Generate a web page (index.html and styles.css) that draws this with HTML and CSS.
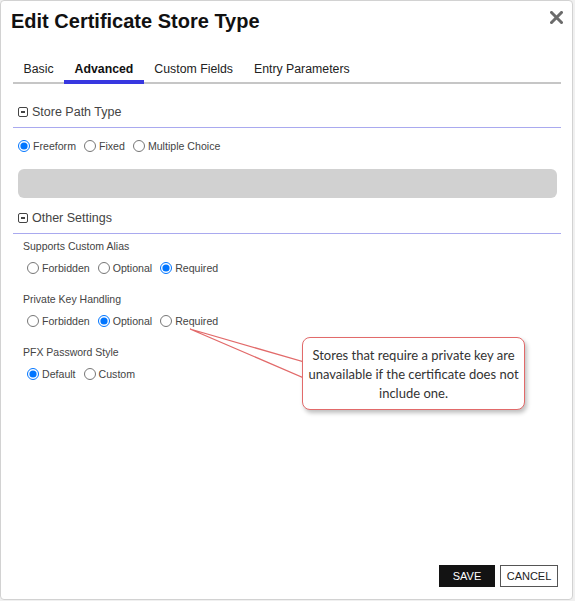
FILE: index.html
```html
<!DOCTYPE html>
<html lang="en">
<head>
    <meta charset="UTF-8">
    <meta name="viewport" content="width=device-width, initial-scale=1.0">
    <title>Edit Certificate Store Type</title>
    <link rel="stylesheet" href="styles.css">
</head>
<body>
    <div class="dialog">
        <div class="dialog-header">
            <h1>Edit Certificate Store Type</h1>
            <button type="button" class="close-btn" aria-label="Close">
                <svg width="13" height="13" viewBox="0 0 13 13">
                    <path d="M1.5 1.5 L11.5 11.5 M11.5 1.5 L1.5 11.5" stroke="#6b6b6b" stroke-width="3" stroke-linecap="square"/>
                </svg>
            </button>
        </div>

        <div class="tabs">
            <span class="tab">Basic</span>
            <span class="tab active">Advanced</span>
            <span class="tab">Custom Fields</span>
            <span class="tab">Entry Parameters</span>
        </div>

        <div class="section">
            <div class="section-title"><span class="toggle"></span>Store Path Type</div>
            <div class="radio-row">
                <label class="radio"><input type="radio" name="pathType" checked> Freeform</label>
                <label class="radio"><input type="radio" name="pathType"> Fixed</label>
                <label class="radio"><input type="radio" name="pathType"> Multiple Choice</label>
            </div>
            <div class="path-input"></div>
        </div>

        <div class="section">
            <div class="section-title other"><span class="toggle"></span>Other Settings</div>

            <div class="field">
                <div class="field-label">Supports Custom Alias</div>
                <div class="radio-row">
                    <label class="radio"><input type="radio" name="alias"> Forbidden</label>
                    <label class="radio"><input type="radio" name="alias"> Optional</label>
                    <label class="radio"><input type="radio" name="alias" checked> Required</label>
                </div>
            </div>

            <div class="field">
                <div class="field-label">Private Key Handling</div>
                <div class="radio-row">
                    <label class="radio"><input type="radio" name="privateKey"> Forbidden</label>
                    <label class="radio"><input type="radio" name="privateKey" checked> Optional</label>
                    <label class="radio"><input type="radio" name="privateKey"> Required</label>
                </div>
            </div>

            <div class="field">
                <div class="field-label">PFX Password Style</div>
                <div class="radio-row">
                    <label class="radio"><input type="radio" name="pfx" checked> Default</label>
                    <label class="radio"><input type="radio" name="pfx"> Custom</label>
                </div>
            </div>
        </div>

        <div class="dialog-footer">
            <button type="button" class="btn btn-save">SAVE</button>
            <button type="button" class="btn btn-cancel">CANCEL</button>
        </div>

        <!-- note pointing at the private key "Required" option -->
        <svg class="callout-pointer" width="575" height="601">
            <polygon points="190,329 304,362 304,378" fill="#fff" stroke="#e26a6a" stroke-width="1.3"/>
        </svg>
        <div class="callout">
            Stores that require a private key are unavailable if the certificate does not include one.
        </div>
    </div>
</body>
</html>
```

FILE: styles.css
```css
body {
    margin: 0;
    background-color: #f0f0f0;
    font-family: "Liberation Sans", Arial, sans-serif;
}

.dialog {
    position: relative;
    box-sizing: border-box;
    width: 573px;
    height: 600px;
    padding: 0 11px 12px 12px;
    background-color: #fff;
    border: 1px solid #d2d2d2;
    border-radius: 4px;
    display: flex;
    flex-direction: column;
}

.dialog-header {
    display: flex;
    justify-content: space-between;
    align-items: flex-start;
    padding-top: 8px;
}

.dialog-header h1 {
    margin: 0 0 0 -2px;
    font-size: 20px;
    line-height: 24px;
    font-weight: bold;
    color: #111;
}

.close-btn {
    margin-top: 2px;
    margin-right: -2px;
    padding: 0;
    border: none;
    background: none;
    cursor: pointer;
    line-height: 0;
}

.tabs {
    display: flex;
    margin-top: 28px;
    border-bottom: 2px solid #c6c6c6;
}

.tab {
    padding: 0 10.5px 3px;
    margin-bottom: -2px;
    font-size: 12.3px;
    line-height: 16px;
    color: #222;
    border-bottom: 4px solid transparent;
}

.tab.active {
    font-weight: bold;
    color: #111;
    border-bottom-color: #3737e0;
}

.section-title {
    display: flex;
    align-items: center;
    margin-top: 19px;
    padding: 0 0 6px 5px;
    font-size: 12.5px;
    line-height: 18px;
    color: #444;
    border-bottom: 1px solid #a9a9ef;
}

.section-title.other {
    margin-top: 11px;
}

.toggle {
    position: relative;
    box-sizing: border-box;
    width: 10px;
    height: 10px;
    margin-right: 4px;
    border: 1px solid #444;
    border-radius: 2px;
}

.toggle::after {
    content: "";
    position: absolute;
    left: 2px;
    top: 3px;
    width: 4px;
    height: 2px;
    background-color: #444;
}

.radio-row {
    display: flex;
    gap: 8px;
    margin-top: 10px;
    padding-left: 5px;
}

.radio {
    display: flex;
    align-items: center;
    font-size: 10.6px;
    line-height: 16px;
    color: #444;
}

.radio input {
    width: 12px;
    height: 12px;
    margin: 0 3px 0 0;
}

.path-input {
    height: 29px;
    margin: 15px 4px 0 5px;
    background-color: #d1d1d1;
    border-radius: 6px;
}

.field {
    margin-top: 16px;
    padding-left: 10px;
}

.section-title.other + .field {
    margin-top: 5px;
}

.field-label {
    font-size: 10.5px;
    line-height: 14px;
    color: #444;
}

.field .radio-row {
    margin-top: 7px;
    padding-left: 4px;
}

.dialog-footer {
    display: flex;
    justify-content: flex-end;
    gap: 5px;
    margin-top: auto;
    padding-right: 3px;
}

.btn {
    height: 22px;
    padding: 0;
    font-family: "Liberation Sans", Arial, sans-serif;
    font-size: 11px;
    cursor: pointer;
}

.btn-save {
    width: 56px;
    background-color: #131313;
    color: #fff;
    border: none;
}

.btn-cancel {
    width: 58px;
    background-color: #fff;
    color: #222;
    border: 1px solid #555;
}

.callout-pointer {
    position: absolute;
    left: -1px;
    top: -1px;
    pointer-events: none;
}

.callout {
    position: absolute;
    left: 301px;
    top: 336px;
    box-sizing: border-box;
    width: 223px;
    height: 73px;
    padding: 8px 2px 0;
    background-color: #fff;
    border: 1.5px solid #e26a6a;
    border-radius: 8px;
    box-shadow: 2px 3px 4px rgba(0, 0, 0, 0.25);
    font-family: Lato, "Open Sans", sans-serif;
    font-size: 13px;
    line-height: 19px;
    color: #333;
    text-align: center;
}
```
